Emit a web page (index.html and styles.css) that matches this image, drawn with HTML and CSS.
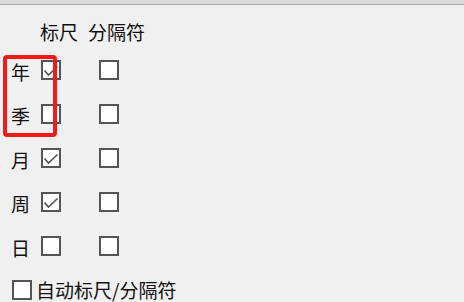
FILE: index.html
```html
<!DOCTYPE html>
<html lang="zh-CN">
<head>
<meta charset="utf-8">
<link rel="stylesheet" href="styles.css">
</head>
<body>
<div class="topbar"></div>
<div class="panel">
  <div class="header">
    <span class="h-ruler">标尺</span>
    <span class="h-sep">分隔符</span>
  </div>
  <div class="row">
    <span class="label">年</span>
    <span class="cb c1"><svg viewBox="0 0 16 16"><polyline points="1.5,8.5 5.5,13 14.5,4.5"/></svg></span>
    <span class="cb c2"></span>
  </div>
  <div class="row">
    <span class="label">季</span>
    <span class="cb c1"></span>
    <span class="cb c2"></span>
  </div>
  <div class="row">
    <span class="label">月</span>
    <span class="cb c1"><svg viewBox="0 0 16 16"><polyline points="1.5,8.5 5.5,13 14.5,4.5"/></svg></span>
    <span class="cb c2"></span>
  </div>
  <div class="row">
    <span class="label">周</span>
    <span class="cb c1"><svg viewBox="0 0 16 16"><polyline points="1.5,8.5 5.5,13 14.5,4.5"/></svg></span>
    <span class="cb c2"></span>
  </div>
  <div class="row">
    <span class="label">日</span>
    <span class="cb c1"></span>
    <span class="cb c2"></span>
  </div>
  <div class="auto">
    <span class="cb"></span>
    <span class="auto-text">自动标尺/分隔符</span>
  </div>
</div>
<div class="highlight"></div>
</body>
</html>
```

FILE: styles.css
```css
html, body {
  margin: 0;
  padding: 0;
}
body {
  width: 464px;
  height: 302px;
  overflow: hidden;
  background: #f0f0f0;
  font-family: "Noto Sans CJK SC", "Noto Sans", sans-serif;
  font-size: 19px;
  color: #111;
  position: relative;
}
.topbar {
  height: 4px;
  background: #dadada;
  border-bottom: 1px solid #a8a8a8;
}
.panel {
  display: flex;
  flex-direction: column;
}
.header {
  display: flex;
  margin-top: 15px;
  height: 24px;
  line-height: 24px;
  padding-left: 40px;
}
.h-ruler {
  width: 48px;
}
.row {
  display: flex;
  align-items: center;
  height: 44px;
  padding-left: 11px;
}
.header + .row {
  margin-top: 4px;
}
.label {
  width: 30px;
  line-height: 24px;
  padding-top: 3px;
}
.cb {
  box-sizing: border-box;
  width: 20px;
  height: 20px;
  border: 2px solid #555;
  background: #fff;
  display: flex;
}
.cb svg {
  width: 16px;
  height: 16px;
}
.cb polyline {
  fill: none;
  stroke: #555;
  stroke-width: 1.7;
}
.c2 {
  margin-left: 38px;
}
.auto {
  display: flex;
  align-items: center;
  height: 44px;
  padding-left: 12px;
}
.auto-text {
  margin-left: 4px;
  line-height: 24px;
}
.highlight {
  position: absolute;
  left: 3px;
  top: 55px;
  width: 54px;
  height: 82px;
  box-sizing: border-box;
  border: 4px solid #f41818;
  border-radius: 4px;
}
```
